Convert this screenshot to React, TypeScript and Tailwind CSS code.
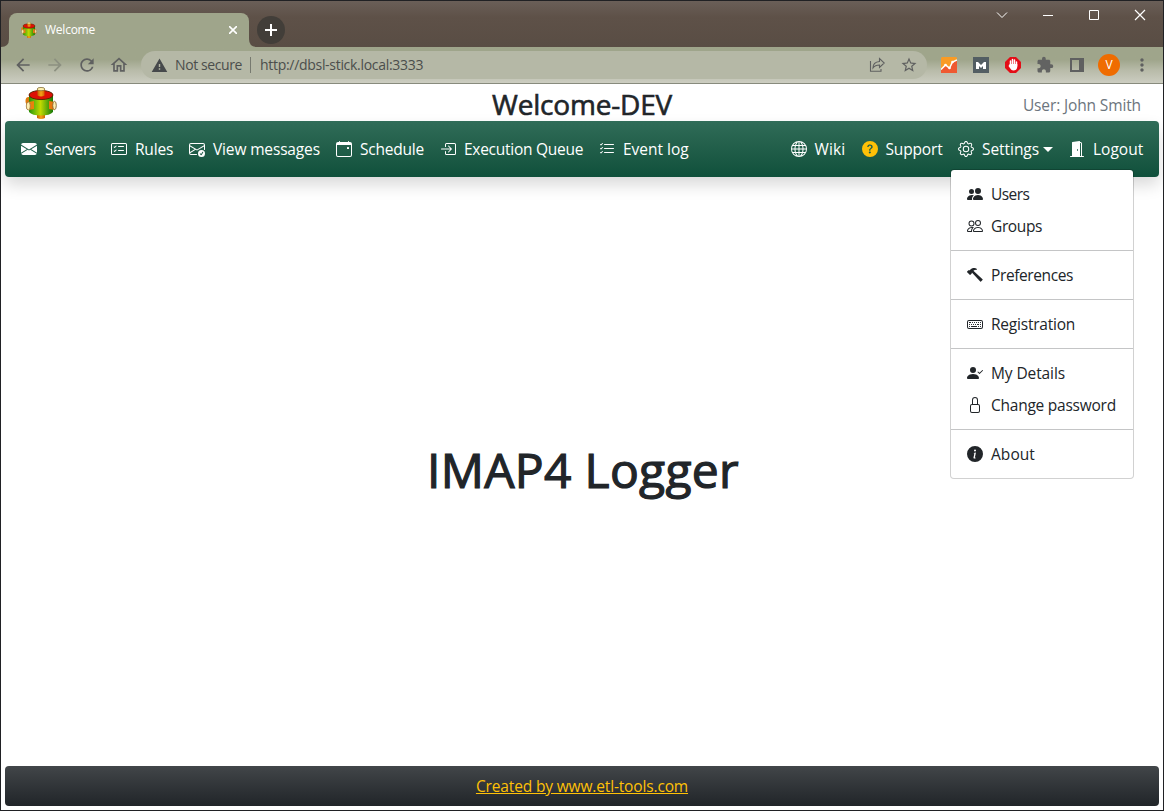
import type { ReactNode } from 'react';
import {
  BsBoxArrowInRight, BsCalendarEvent, BsCardChecklist, BsDoorOpenFill, BsEnvelopeCheck, BsEnvelopeFill,
  BsGear, BsGlobe, BsHammer, BsInfoCircleFill, BsKeyboard, BsListCheck, BsLock, BsPeople, BsPeopleFill,
  BsPersonCheckFill, BsQuestionCircleFill,
} from 'react-icons/bs';
import { MdArrowBack, MdArrowForward, MdExtension, MdMoreVert, MdOutlineHome, MdRefresh, MdStarBorder, MdWarning } from 'react-icons/md';

function Logo({ className }: { className: string }) {
  return (
    <svg viewBox="0 0 32 32" className={className}>
      <defs>
        <linearGradient id="barrel" x1="0" x2="1">
          <stop offset="0" stopColor="#278f08" />
          <stop offset=".2" stopColor="#64b60a" />
          <stop offset=".48" stopColor="#c2d900" />
          <stop offset=".75" stopColor="#61aa09" />
          <stop offset="1" stopColor="#167707" />
        </linearGradient>
        <linearGradient id="pipe" x1="0" x2="1">
          <stop offset="0" stopColor="#c56200" />
          <stop offset=".5" stopColor="#f5a319" />
          <stop offset="1" stopColor="#d16600" />
        </linearGradient>
      </defs>
      <path d="M12 26h8v5q-4 2-8 0z" fill="url(#pipe)" />
      <ellipse cx="3.5" cy="14" rx="3" ry="4" fill="#df7a0b" />
      <path d="M4 8v17q3 3.500 12 3.500T28 25V8z" fill="url(#barrel)" />
      <ellipse cx="16" cy="8" rx="12" ry="4.600" fill="#dd1005" stroke="#4f2400" strokeWidth=".9" />
      <path d="M12.500 2v6.500q3.500 2 7 0V2z" fill="url(#pipe)" />
      <ellipse cx="16" cy="2.100" rx="3.800" ry="1.700" fill="#fff0ae" stroke="#816c32" strokeWidth=".8" />
      <path d="M3 15l6-1v8l-6 1z" fill="#e9810c" />
      <ellipse cx="3.300" cy="19" rx="2" ry="4" fill="#fff0b2" stroke="#997138" strokeWidth=".8" />
      <path d="M24 14l6 1v8l-6-1z" fill="#e9780e" />
      <ellipse cx="29.500" cy="18.500" rx="1.800" ry="4.200" fill="#fff0b2" stroke="#795422" strokeWidth=".8" />
    </svg>
  );
}

function NavItem({ icon, width, spacing, children }: { icon: ReactNode; width: string; spacing: string; children: ReactNode }) {
  return (
    <a className="flex items-center whitespace-nowrap">
      <span className="mr-2 size-4 text-[16px]">{icon}</span>
      <span className={`${width} ${spacing}`}>{children}</span>
    </a>
  );
}

function MenuItem({ icon, spacing, children }: { icon: ReactNode; spacing: string; children: ReactNode }) {
  return (
    <a className="flex h-8 items-center px-4 whitespace-nowrap">
      <span className="mr-2 size-4 text-[16px]">{icon}</span>
      <span className={spacing}>{children}</span>
    </a>
  );
}

const Divider = () => <div className="my-2 h-px bg-[#c4c5c6]" />;

function TabStrip() {
  return (
    <div className="flex h-[46px] bg-linear-to-b from-[#6a5f58] via-[#5e5148] via-35% to-[#594d44]">
      <div className="relative ml-2 mt-3 flex h-[34px] w-60 items-center rounded-t-lg bg-[#9fa58b] pl-3">
        <svg className="absolute -left-2 bottom-0 size-2" viewBox="0 0 8 8"><path d="M8 0v8H0q8 0 8-8" fill="#9fa58b" /></svg>
        <svg className="absolute -right-2 bottom-0 size-2" viewBox="0 0 8 8"><path d="M0 0v8h8q-8 0-8-8" fill="#9fa58b" /></svg>
        <Logo className="size-4" />
        <span className="ml-2 text-[12px] tracking-[-0.24px] text-white">Welcome</span>
        <svg className="mr-3 ml-auto size-[8px]" viewBox="0 0 8 8" stroke="white" strokeWidth="1.6"><path d="M0 0l8 8M8 0L0 8" /></svg>
      </div>
      <div className="mt-[15px] ml-2 flex size-7 items-center justify-center rounded-full bg-[#423e39]">
        <svg className="size-3" viewBox="0 0 12 12" stroke="white" strokeWidth="2"><path d="M6 0v12M0 6h12" /></svg>
      </div>
      <div className="mt-2 mr-[17px] ml-auto flex h-3 items-center gap-[34px]">
        <svg className="size-3" viewBox="0 0 12 12" fill="none" stroke="white" strokeWidth="1"><path d="M1 3.500l5 5 5-5" /></svg>
        <svg className="size-3" viewBox="0 0 12 12" fill="none" stroke="white"><path d="M1 6.500h10" /></svg>
        <svg className="size-3" viewBox="0 0 12 12" fill="none" stroke="white"><path d="M1.500 1.500h9v9h-9z" /></svg>
        <svg className="size-3" viewBox="0 0 12 12" fill="none" stroke="white" strokeWidth="1.200"><path d="M1 1l10 10M11 1L1 11" /></svg>
      </div>
    </div>
  );
}

function Toolbar() {
  return (
    <div className="flex h-[37px] items-center border-b border-[#888b7d] bg-linear-to-b from-[#9fa58b] from-35% via-[#b8bba9] via-65% to-[#cccdc1] text-[#5f6060]">
      <div className="ml-3 flex gap-3 text-[20px]">
        <MdArrowBack />
        <MdArrowForward className="text-[#8c9080]" />
        <MdRefresh />
        <MdOutlineHome />
      </div>
      <div className="ml-3 flex h-7 w-[786px] items-center rounded-full bg-[#b5b8a6] text-[14px]">
        <MdWarning className="ml-2.5 text-[17px] text-[#46494b]" />
        <span className="ml-[7px] w-[67px] whitespace-nowrap tracking-[-0.4px] text-[#4b4e4c]">Not secure</span>
        <span className="mx-2 h-4 w-px bg-[#777a70]" />
        <span className="ml-px whitespace-nowrap tracking-[-0.3px] text-[#4b4e4c]">http://dbsl-stick.local:3333</span>
        <svg className="ml-auto size-4" viewBox="0 0 16 16" fill="none" stroke="currentColor" strokeWidth="1.1">
          <path d="M1.500 4v10.300H12V12" />
          <path d="M4 11q0-6 6.500-6.500V1.500l4.800 4.500-4.800 4.500V8Q6 8 4 11z" />
        </svg>
        <MdStarBorder className="mr-[9px] ml-[15px] text-[18px]" />
      </div>
      <svg className="ml-3.5 size-4" viewBox="0 0 16 16">
        <path d="M1 0h14l1 1v15H0V1z" fill="#f99b25" /><path d="M0 13l4.500-4 4 3 3-6L16 3v13H0z" fill="#ef5931" />
        <path d="M0 12.500L4.500 8l4 3 3-6L16 3" fill="none" stroke="white" strokeWidth="1.500" />
        <circle cx="4.500" cy="8" r="1.300" fill="white" /><circle cx="8.500" cy="11" r="1.300" fill="white" /><circle cx="11.500" cy="5" r="1.300" fill="white" />
      </svg>
      <svg className="ml-4 size-4" viewBox="0 0 16 16"><path d="M0 0h16v16H0z" fill="#535e63" /><path d="M3 12V5h2l3 3 3-3h2v7h-3V9l-2 2-2-2v3z" fill="white" /></svg>
      <svg className="ml-4 size-4" viewBox="0 0 16 16">
        <path d="M5 0h6l5 5v6l-5 5H5l-5-5V5z" fill="#e30d17" />
        <path d="M5.500 9V4M7.500 8V2.500M9.500 8V3M11.500 9V5" stroke="white" strokeWidth="1.500" strokeLinecap="round" />
        <path d="M4.800 7h7.500v3q-.5 3.500-4 3.500-2 0-3-2L3.500 9z" fill="white" />
      </svg>
      <MdExtension className="ml-[15px] text-[18px] text-[#626362]" />
      <svg className="ml-4 h-[14px] w-[14px]" viewBox="0 0 14 14"><path d="M0 0h14v14H0zM2 2v10h7V2z" fill="#5f6060" fillRule="evenodd" /></svg>
      <span className="ml-3.5 flex size-[22px] items-center justify-center rounded-full bg-[#ef6c00] text-[12px] text-white">V</span>
      <MdMoreVert className="mr-[11px] ml-auto text-[20px]" />
    </div>
  );
}

function SettingsMenu() {
  return (
    <div className="absolute top-12 right-[25px] w-[184px] rounded border border-black/18 bg-white bg-clip-padding py-2 text-[#212529]">
      <MenuItem icon={<BsPeopleFill />} spacing="tracking-[-0.58px]">Users</MenuItem>
      <MenuItem icon={<BsPeople />} spacing="tracking-[-0.38px]">Groups</MenuItem>
      <Divider />
      <MenuItem icon={<BsHammer />} spacing="tracking-[-0.39px]">Preferences</MenuItem>
      <Divider />
      <MenuItem icon={<BsKeyboard />} spacing="tracking-[-0.22px]">Registration</MenuItem>
      <Divider />
      <MenuItem icon={<BsPersonCheckFill />} spacing="tracking-[-0.1px]">My Details</MenuItem>
      <MenuItem icon={<BsLock />} spacing="tracking-[-0.24px]">Change password</MenuItem>
      <Divider />
      <MenuItem icon={<BsInfoCircleFill />} spacing="tracking-[0.05px]">About</MenuItem>
    </div>
  );
}

export default function App() {
  return (
    <div className="flex h-[811px] w-[1164px] flex-col overflow-hidden border border-[#202124] bg-white font-['Open_Sans',sans-serif] text-[15.5px] leading-6">
      <TabStrip />
      <Toolbar />
      <div className="flex min-h-0 flex-1 flex-col px-1 pb-1">
        <header className="grid h-[37px] shrink-0 grid-cols-3 items-center">
          <Logo className="ml-5 size-8" />
          <h1 className="mt-0.5 text-center text-[28px] leading-9 tracking-[-0.19px] whitespace-nowrap text-[#212529] [-webkit-text-stroke:0.6px_#212529]">Welcome-DEV</h1>
          <span className="mt-1 mr-[18px] text-right tracking-[-0.13px] text-[#6c757d]">User: John Smith</span>
        </header>
        <nav className="relative flex h-14 shrink-0 items-center justify-between rounded bg-linear-to-b from-[#306c58] to-[#0f503b] px-4 text-white shadow-[0_8px_16px_rgba(0,0,0,0.15)]">
          <div className="flex gap-4">
            <NavItem icon={<BsEnvelopeFill />} width="w-[50px]" spacing="tracking-[-0.42px]">Servers</NavItem>
            <NavItem icon={<BsCardChecklist />} width="w-[38px]" spacing="tracking-[-0.2px]">Rules</NavItem>
            <NavItem icon={<BsEnvelopeCheck />} width="w-[107px]" spacing="tracking-[-0.15px]">View messages</NavItem>
            <NavItem icon={<BsCalendarEvent />} width="w-[64px]" spacing="tracking-[-0.22px]">Schedule</NavItem>
            <NavItem icon={<BsBoxArrowInRight />} width="w-[119px]" spacing="tracking-[-0.27px]">Execution Queue</NavItem>
            <NavItem icon={<BsListCheck />} width="w-[66px]" spacing="tracking-normal">Event log</NavItem>
          </div>
          <div className="flex gap-4">
            <NavItem icon={<BsGlobe />} width="w-[31px]" spacing="tracking-[0.15px]">Wiki</NavItem>
            <NavItem icon={<BsQuestionCircleFill className="text-[#ffc107]" />} width="w-[56.5px]" spacing="tracking-[-0.16px]">Support</NavItem>
            <div className="flex items-center">
              <NavItem icon={<BsGear />} width="w-[57px]" spacing="tracking-[-0.05px]">Settings</NavItem>
              <svg className="ml-1 h-[5px] w-[10px]" viewBox="0 0 10 5"><path d="M0 0h10L5 5z" fill="white" /></svg>
            </div>
            <NavItem icon={<BsDoorOpenFill />} width="w-[50px]" spacing="tracking-normal">Logout</NavItem>
          </div>
          <SettingsMenu />
        </nav>
        <main className="flex flex-1 items-center justify-center pb-1">
          <h2 className="ml-0.5 text-[48px] leading-none tracking-[0.3px] text-[#212529] [-webkit-text-stroke:1.2px_#212529]">IMAP4 Logger</h2>
        </main>
        <footer className="flex h-10 shrink-0 items-center justify-center rounded bg-linear-to-b from-[#424649] to-[#212529]">
          <a className="tracking-[-0.15px] text-[#ffc107] underline">Created by www.etl-tools.com</a>
        </footer>
      </div>
    </div>
  );
}
